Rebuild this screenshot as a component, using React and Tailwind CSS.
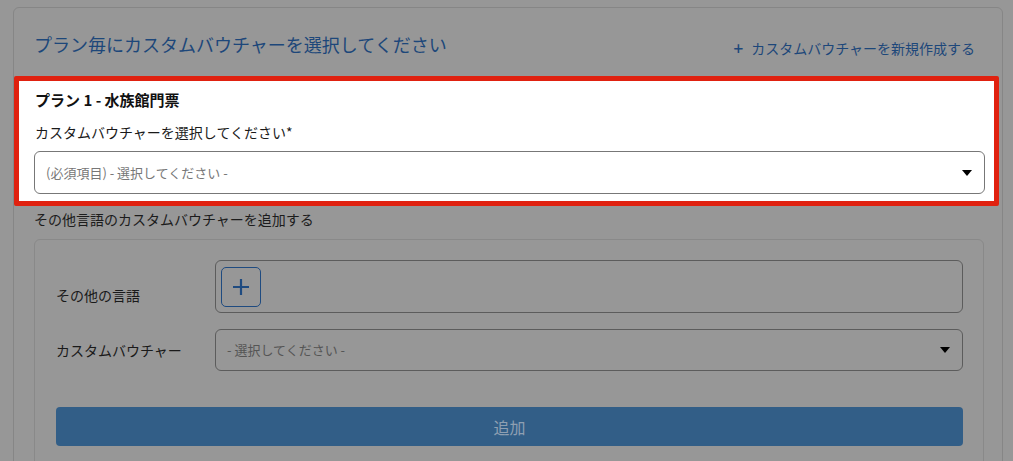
import React from "react";

const Caret = ({ className }) => (
  <svg className={className} width="10" height="6" viewBox="0 0 10 6">
    <path d="M0 0h10L5 6z" fill="currentColor" />
  </svg>
);

const App = () => {
  return (
    <div
      className="w-[1013px] h-[461px] overflow-hidden bg-[#979797] pt-[7px] pl-[13px] pr-[10px]"
      style={{ fontFamily: '"Noto Sans CJK JP", "Noto Sans", sans-serif' }}
    >
      <div className="border border-[#868686] rounded-[6px] pl-[20px] pr-[18px] pt-[23px] h-[470px]">
        <div className="flex items-end justify-between">
          <h1 className="text-[18px] leading-[26px] text-[#1d477a]">
            プラン毎にカスタムバウチャーを選択してください
          </h1>
          <button className="flex items-center gap-[8px] text-[14px] leading-[20px] text-[#1d477a] mr-[9px] -mb-[1px]">
            <span className="text-[17px] leading-[20px] font-medium">+</span>
            カスタムバウチャーを新規作成する
          </button>
        </div>

        <div className="mt-[19px] -ml-[20px] -mr-[15px] border-[5px] border-[#e0210f] rounded-[2px] bg-white pl-[15px] pr-[9px] pt-[8px] pb-[7px]">
          <h2 className="text-[15px] leading-[22px] font-bold text-[#111] pl-[1px]">
            プラン 1 - 水族館門票
          </h2>
          <p className="mt-[11px] text-[14px] leading-[20px] text-[#1a1a1a] pl-[1px]">
            カスタムバウチャーを選択してください*
          </p>
          <div className="mt-[9px] h-[43px] border border-[#777] rounded-[6px] flex items-center justify-between pl-[11px] pr-[12px]">
            <span className="text-[13px] text-[#777]">(必須項目) - 選択してください -</span>
            <Caret className="text-black" />
          </div>
        </div>

        <p className="mt-[3px] text-[14px] leading-[20px] text-[#1c1c1c]">
          その他言語のカスタムバウチャーを追加する
        </p>

        <div className="mt-[10px] border border-[#898989] rounded-[6px] pl-[21px] pr-[20px] pt-[20px] pb-[20px]">
          <div className="flex items-center">
            <span className="w-[159px] mt-[17px] text-[14px] leading-[20px] text-[#1a1a1a]">
              その他の言語
            </span>
            <div className="flex-1 h-[53px] border border-[#5c5c5c] rounded-[6px] flex items-center pl-[5px]">
              <button className="w-[40px] h-[40px] border border-[#1f4b80] rounded-[5px] flex items-center justify-center">
                <svg width="20" height="20" viewBox="0 0 20 20">
                  <path d="M10 2v16M2 10h16" stroke="#1f4b80" strokeWidth="2.2" />
                </svg>
              </button>
            </div>
          </div>

          <div className="flex items-center mt-[16px]">
            <span className="w-[159px] text-[14px] leading-[20px] text-[#1a1a1a]">
              カスタムバウチャー
            </span>
            <div className="flex-1 h-[42px] border border-[#5c5c5c] rounded-[6px] flex items-center justify-between pl-[11px] pr-[12px]">
              <span className="text-[13px] text-[#555]">- 選択してください -</span>
              <Caret className="text-black" />
            </div>
          </div>

          <button className="mt-[36px] w-full h-[39px] rounded-[4px] bg-[#325e87] text-[16px] text-[#8e9fb2]">
            追加
          </button>
        </div>
      </div>
    </div>
  );
};

export default App;
